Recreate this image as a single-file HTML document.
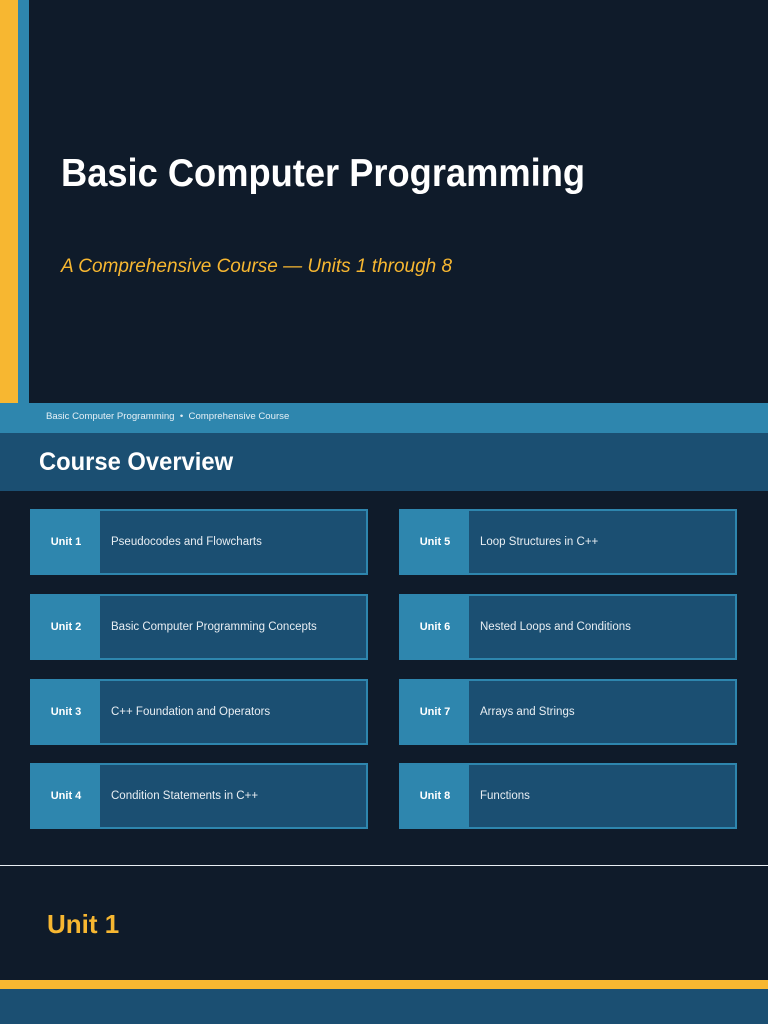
<!DOCTYPE html>
<html><head><meta charset="utf-8"><style>
*{margin:0;padding:0;box-sizing:border-box}
body{width:768px;height:1024px;background:#0f1b2a;position:relative;overflow:hidden;font-family:"Liberation Sans",sans-serif;color:#fff}
.a{position:absolute}
.card{position:absolute;width:338px;height:66px;background:#1b4f72;border:2px solid #2e86ae;display:flex;align-items:center}
.card .l{width:68px;height:100%;background:#2e86ae;font-weight:bold;font-size:11px;display:flex;align-items:center;justify-content:center}
.card .t{font-size:11.5px;padding-left:11px;color:#e8eef3}
</style></head><body>
<div class="a" style="left:0;top:0;width:18px;height:403px;background:#f7b731"></div>
<div class="a" style="left:18px;top:0;width:11px;height:403px;background:#2e86ae"></div>
<div class="a" style="left:61px;top:152px;font-size:39px;font-weight:bold;white-space:nowrap;transform:scaleX(0.93);transform-origin:left top">Basic Computer Programming</div>
<div class="a" style="left:61px;top:256px;font-size:19px;font-style:italic;color:#f7b731;white-space:nowrap">A Comprehensive Course — Units 1 through 8</div>
<div class="a" style="left:0;top:403px;width:768px;height:30px;background:#2e86ae"></div>
<div class="a" style="left:46px;top:411px;font-size:9.6px;color:#e6f0f6;white-space:nowrap">Basic Computer Programming &nbsp;•&nbsp; Comprehensive Course</div>
<div class="a" style="left:0;top:433px;width:768px;height:58px;background:#1b4f72"></div>
<div class="a" style="left:39px;top:448px;font-size:25px;font-weight:bold;white-space:nowrap;transform:scaleX(0.95);transform-origin:left top">Course Overview</div>

<div class="card" style="left:30px;top:509px"><div class="l">Unit 1</div><div class="t">Pseudocodes and Flowcharts</div></div>
<div class="card" style="left:30px;top:594px"><div class="l">Unit 2</div><div class="t">Basic Computer Programming Concepts</div></div>
<div class="card" style="left:30px;top:679px"><div class="l">Unit 3</div><div class="t">C++ Foundation and Operators</div></div>
<div class="card" style="left:30px;top:763px"><div class="l">Unit 4</div><div class="t">Condition Statements in C++</div></div>
<div class="card" style="left:399px;top:509px"><div class="l">Unit 5</div><div class="t">Loop Structures in C++</div></div>
<div class="card" style="left:399px;top:594px"><div class="l">Unit 6</div><div class="t">Nested Loops and Conditions</div></div>
<div class="card" style="left:399px;top:679px"><div class="l">Unit 7</div><div class="t">Arrays and Strings</div></div>
<div class="card" style="left:399px;top:763px"><div class="l">Unit 8</div><div class="t">Functions</div></div>

<div class="a" style="left:0;top:865px;width:768px;height:1px;background:#e8eef3"></div>
<div class="a" style="left:47px;top:909px;font-size:26px;font-weight:bold;color:#f7b731;white-space:nowrap">Unit 1</div>
<div class="a" style="left:0;top:980px;width:768px;height:9px;background:#f7b731"></div>
<div class="a" style="left:0;top:989px;width:768px;height:35px;background:#1b4f72"></div>
</body></html>
